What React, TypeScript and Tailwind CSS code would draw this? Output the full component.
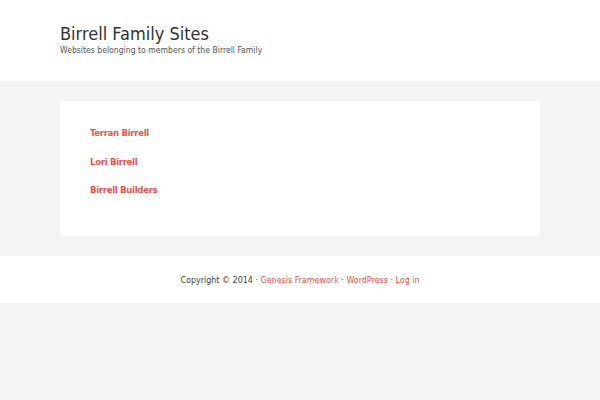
export default function App() {
  return (
    <div className="min-h-[400px] bg-[#f4f4f4] font-['DejaVu_Sans_Condensed','DejaVu_Sans',sans-serif] text-[#333]">
      <header className="h-[81px] bg-white px-[60px] pt-[22px]">
        <h1 className="text-[18px] leading-[24px] font-normal text-[#333]">Birrell Family Sites</h1>
        <p className="-mt-[1px] text-[8.6px] leading-[11px] text-[#555]">Websites belonging to members of the Birrell Family</p>
      </header>

      <main className="px-[60px] py-[20px]">
        <div className="flex h-[135px] flex-col gap-[13.5px] bg-white px-[30px] pt-[24px]">
          <a className="text-[9.5px] font-bold leading-[15px] tracking-[-0.3px] text-[#e5554e]">Terran Birrell</a>
          <a className="text-[9.5px] font-bold leading-[15px] tracking-[-0.3px] text-[#e5554e]">Lori Birrell</a>
          <a className="text-[9.5px] font-bold leading-[15px] tracking-[-0.3px] text-[#e5554e]">Birrell Builders</a>
        </div>
      </main>

      <footer className="flex h-[47px] items-center justify-center bg-white pt-[2px] text-[8.9px] text-[#444]">
        <p>
          Copyright © 2014 · <a className="text-[#e5554e]">Genesis Framework</a> ·{" "}
          <a className="text-[#e5554e]">WordPress</a> · <a className="text-[#e5554e]">Log in</a>
        </p>
      </footer>
    </div>
  );
}
